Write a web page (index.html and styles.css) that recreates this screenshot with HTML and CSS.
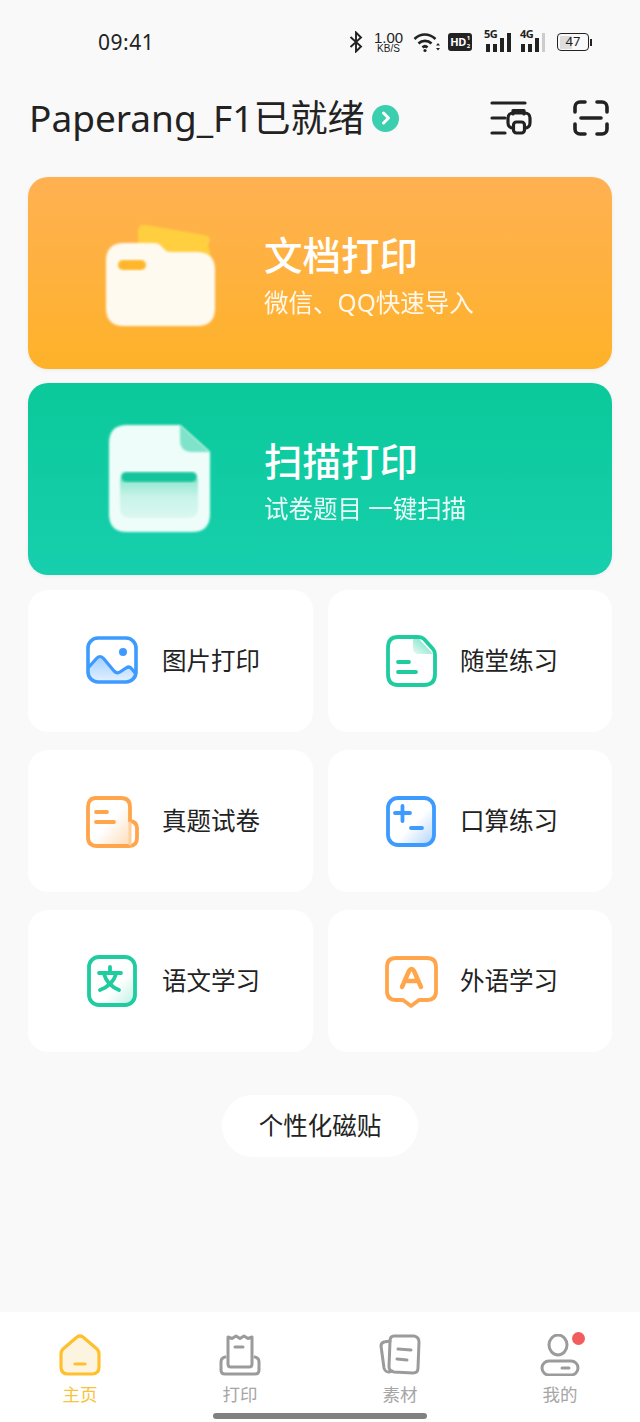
FILE: index.html
```html
<!DOCTYPE html>
<html lang="zh-CN">
<head>
  <meta charset="UTF-8">
  <meta name="viewport" content="width=device-width, initial-scale=1.0">
  <title>Paperang</title>
  <link rel="stylesheet" href="styles.css">
</head>
<body>
  <div class="page">
    <!-- status bar -->
    <div class="status">
      <span class="time">09:41</span>
      <div class="status-icons">
        <svg class="ic-bt" width="14" height="22" viewBox="0 0 14 22" fill="none" stroke="#222" stroke-width="1.9"><path d="M1.5 6 12 15.5 7 20.5V1.5l5 5L1.5 16"/></svg>
        <div class="speed"><span class="speed-num">1.00</span><span class="speed-unit">KB/S</span></div>
        <svg class="ic-wifi" width="27" height="22" viewBox="0 0 27 22" fill="none" stroke="#222" stroke-width="2.6"><path d="M1.5 8C7.5 2 16 2 22.500 8"/><path d="M5.500 12.500C9 9 15 9 18.500 12.500"/><path d="M9.500 16.500c1.500-1.500 3.500-1.500 5 0"/><circle cx="12" cy="19.500" r="1.600" fill="#222" stroke="none"/><path d="M23 14.500l2-2.500 2 2.500zM23 17l2 2.500 2-2.500z" fill="#222" stroke="none"/></svg>
        <div class="hd">HD<span class="hd-sub">1<br>2</span></div>
        <div class="signal signal-5g">
          <span class="net">5G</span>
          <svg width="28" height="22" viewBox="0 0 28 22" fill="#222"><rect x="2" y="13" width="4" height="8"/><rect x="9" y="13" width="4" height="8"/><rect x="16" y="7" width="4" height="14"/><rect x="23" y="2" width="4" height="19"/></svg>
        </div>
        <div class="signal signal-4g">
          <span class="net">4G</span>
          <svg width="26" height="22" viewBox="0 0 26 22" fill="#222"><rect x="1" y="13" width="4" height="8"/><rect x="8" y="13" width="4" height="8"/><rect x="15" y="7" width="4" height="14"/><rect x="22" y="2" width="3" height="19" fill="#ccc"/></svg>
        </div>
        <div class="battery"><div class="battery-body"><span class="battery-level"></span><span class="battery-num">47</span></div><span class="battery-cap"></span></div>
      </div>
    </div>

    <!-- title row -->
    <div class="topbar">
      <h1 class="device">Paperang_F1已就绪</h1>
      <span class="chev"><svg width="12" height="14" viewBox="0 0 12 14" fill="none" stroke="#fff" stroke-width="3" stroke-linecap="round" stroke-linejoin="round"><path d="M3.500 2 8.500 7l-5 5"/></svg></span>
      <svg class="ic-queue" width="42" height="36" viewBox="0 0 42 36" fill="none" stroke="#222" stroke-width="3.200" stroke-linecap="round" stroke-linejoin="round">
        <path d="M2 3h33M2 18h13M2 33h13"/>
        <path d="M23 14V10.500h11V14"/>
        <rect x="18" y="13" width="22" height="15" rx="5"/>
        <rect x="23.500" y="22" width="11" height="11" rx="3" fill="#f9f9f9"/>
      </svg>
      <svg class="ic-scan" width="36" height="36" viewBox="0 0 36 36" fill="none" stroke="#222" stroke-width="3.600" stroke-linecap="round">
        <path d="M2 12V7a5 5 0 0 1 5-5h5M24 2h5a5 5 0 0 1 5 5v5M34 24v5a5 5 0 0 1-5 5h-5M12 34H7a5 5 0 0 1-5-5v-5"/>
        <path d="M8 18h20"/>
      </svg>
    </div>

    <!-- big cards -->
    <div class="big-card card-orange">
      <svg class="big-icon" width="124" height="112" viewBox="0 0 124 112">
        <defs><filter id="soft" x="-10%" y="-10%" width="120%" height="120%"><feGaussianBlur stdDeviation="0.8"/></filter></defs>
        <path d="M38 13q1-6 8-5l58 10q6 1 6 5l-2 6 2 6v20H38z" fill="#ffcf3f" filter="url(#soft)"/>
        <path d="M24 26H54q5 0 8 4l3 3q2 2 5 2H97q18 0 18 18V91q0 18-18 18H24Q6 109 6 91V44Q6 26 24 26z" fill="#fffaf0" filter="url(#soft)"/>
        <rect x="18" y="43" width="28" height="10" rx="5" fill="#ffb62c" filter="url(#soft)"/>
      </svg>
      <div class="big-text">
        <div class="big-title">文档打印</div>
        <div class="big-sub">微信、QQ快速导入</div>
      </div>
    </div>
    <div class="big-card card-green">
      <svg class="big-icon" width="124" height="116" viewBox="0 0 124 116">
        <defs>
          <linearGradient id="scanfill" x1="0" y1="0" x2="0" y2="1"><stop offset="0" stop-color="#8fe6cf"/><stop offset="0.45" stop-color="#c8f3e8"/><stop offset="1" stop-color="#daf8f1"/></linearGradient>
        </defs>
        <path d="M27 4H80l30 27v62q0 18-18 18H27Q9 111 9 93V22Q9 4 27 4z" fill="#eefdf9" filter="url(#soft)"/>
        <path d="M80 4l30 27H92q-12 0-12-12z" fill="#7fe3ca" filter="url(#soft)"/>
        <path d="M20 58h78v29q0 10-10 10H30q-10 0-10-10z" fill="url(#scanfill)" filter="url(#soft)"/>
        <rect x="21" y="51" width="76" height="10" rx="5" fill="#16c49b" filter="url(#soft)"/>
      </svg>
      <div class="big-text">
        <div class="big-title">扫描打印</div>
        <div class="big-sub">试卷题目 一键扫描</div>
      </div>
    </div>

    <!-- small tiles -->
    <div class="tiles">
      <div class="tile">
        <svg class="tile-icon" width="54" height="54" viewBox="0 0 54 54" fill="none">
          <defs><linearGradient id="bluefade" x1="0" y1="0" x2="0" y2="1"><stop offset="0" stop-color="#a3d0ff"/><stop offset="1" stop-color="#e3f1ff"/></linearGradient></defs>
          <path d="M3 34 11 25q4-5 8 0L29 37q3 3 6 1l6-4q3-2 5 0l5 6v1q0 7-7 7H10q-7 0-7-7z" fill="url(#bluefade)"/>
          <path d="M3 34 11 25q4-5 8 0L29 37q3 3 6 1l6-4q3-2 5 0l5 6" stroke="#3d9bff" stroke-width="3.200"/>
          <rect x="3" y="4" width="48" height="44" rx="10" stroke="#3d9bff" stroke-width="3.600"/>
          <circle cx="38" cy="18" r="4" fill="#3d9bff"/>
        </svg>
        <span class="tile-label">图片打印</span>
      </div>
      <div class="tile">
        <svg class="tile-icon" width="54" height="54" viewBox="0 0 54 54" fill="none" stroke="#1fcca0" stroke-width="3.800" stroke-linecap="round" stroke-linejoin="round">
          <defs><linearGradient id="foldfade" x1="1" y1="0" x2="0" y2="1"><stop offset="0.3" stop-color="#8fe6cf"/><stop offset="1" stop-color="#e6faf4"/></linearGradient></defs>
          <path d="M28 5h6l14 15H34q-6 0-6-6z" fill="url(#foldfade)" stroke="none"/>
          <path d="M13 3h20q4 0 6 2l9 10q2 2 2 6V40q0 11-11 11H13Q3 51 3 40V14Q3 3 13 3z"/>
          <path d="M13 28h11M13 38h18"/>
        </svg>
        <span class="tile-label">随堂练习</span>
      </div>
      <div class="tile">
        <svg class="tile-icon" width="54" height="54" viewBox="0 0 54 54" fill="none" stroke="#ffa64d" stroke-width="3.800" stroke-linecap="round" stroke-linejoin="round">
          <defs><linearGradient id="orangefade" x1="0" y1="0" x2="1" y2="1"><stop offset="0.5" stop-color="#fff"/><stop offset="1" stop-color="#ffdcb8"/></linearGradient></defs>
          <path d="M11 4H36q9 0 9 9V52H12q-9 0-9-9V13q0-9 8-9z" fill="url(#orangefade)" stroke="none"/>
          <path d="M45 27V13q0-9-9-9H11q-8 0-8 9V43q0 9 9 9H44q8 0 8-8V34q0-6-7-7"/>
          <path class="tile-seam" d="M45 29V50"/>
          <path d="M11 18h11M11 28h18"/>
        </svg>
        <span class="tile-label">真题试卷</span>
      </div>
      <div class="tile">
        <svg class="tile-icon" width="54" height="54" viewBox="0 0 54 54" fill="none" stroke="#3d9bff" stroke-width="3.800" stroke-linecap="round">
          <defs><linearGradient id="bluecorner" x1="0" y1="0" x2="1" y2="1"><stop offset="0.55" stop-color="#fff"/><stop offset="1" stop-color="#aed3fb"/></linearGradient></defs>
          <rect x="3" y="4" width="46" height="47" rx="10" fill="url(#bluecorner)"/>
          <path d="M10 19h15M17.500 12v15M26 34h11"/>
        </svg>
        <span class="tile-label">口算练习</span>
      </div>
      <div class="tile">
        <svg class="tile-icon" width="54" height="54" viewBox="0 0 54 54" fill="none" stroke="#1fcca0" stroke-width="3.800" stroke-linecap="round" stroke-linejoin="round">
          <defs><linearGradient id="greencorner" x1="0" y1="0" x2="1" y2="1"><stop offset="0.6" stop-color="#fff"/><stop offset="1" stop-color="#bcf0e1"/></linearGradient></defs>
          <rect x="4" y="3" width="46" height="48" rx="10" fill="url(#greencorner)"/>
          <path d="M25 13v5M14 19h22M19 20q3 11 15 16M31 20q-3 11-16 16"/>
        </svg>
        <span class="tile-label">语文学习</span>
      </div>
      <div class="tile">
        <svg class="tile-icon" width="54" height="54" viewBox="0 0 54 54" fill="none" stroke="#ffa64d" stroke-width="3.800" stroke-linecap="round" stroke-linejoin="round">
          <path d="M11 4h31q9 0 9 9v24q0 9-9 9h-8l-8 6-8-6h-7q-9 0-9-9V13q0-9 9-9z" fill="#fff"/>
          <path class="tile-a" d="M17 33l7-16q2.500-4 5 0l7 16M20.500 27h12"/>
        </svg>
        <span class="tile-label">外语学习</span>
      </div>
    </div>

    <div class="pill">个性化磁贴</div>

    <!-- bottom tabs -->
    <div class="tabbar">
      <div class="tab tab-on">
        <svg width="42" height="42" viewBox="0 0 42 42" fill="none" stroke="#ffc02e" stroke-width="3.200" stroke-linecap="round" stroke-linejoin="round">
          <path d="M18 3q3-2 6 0l14 12q2 2 2 5v13q0 7-7 7H9q-7 0-7-7V20q0-3 2-5z" fill="#fdf4e0"/>
          <path d="M16 30h10"/>
        </svg>
        <span class="tab-label">主页</span>
      </div>
      <div class="tab">
        <svg width="42" height="42" viewBox="0 0 42 42" fill="none" stroke="#9b9b9b" stroke-width="3" stroke-linecap="round" stroke-linejoin="round">
          <path d="M9 30V3l4 1.500L17 2l4 2.500L25 2l4 2.500L33 3v27q0 3-3 3H12q-3 0-3-3z"/>
          <path d="M6 23q-4 1-4 5v8q0 4 4 4h30q4 0 4-4v-8q0-4-4-5"/>
          <path d="M16 13h8"/>
        </svg>
        <span class="tab-label">打印</span>
      </div>
      <div class="tab">
        <svg width="42" height="42" viewBox="0 0 42 42" fill="none" stroke="#9b9b9b" stroke-width="3" stroke-linecap="round" stroke-linejoin="round">
          <path d="M11 7 5 8q-3 1-3 4l3 22q1 4 5 4l3-1"/>
          <path d="M15 2h20q5 1 5 6l-1 26q0 5-5 5l-19-1q-5-1-5-5l1-26q0-5 4-5z"/>
          <path d="M19 15l13 1M18 25l10 1"/>
        </svg>
        <span class="tab-label">素材</span>
      </div>
      <div class="tab">
        <div class="tab-icon-wrap">
          <svg width="42" height="42" viewBox="0 0 42 42" fill="none" stroke="#9b9b9b" stroke-width="3" stroke-linecap="round" stroke-linejoin="round">
            <ellipse cx="19" cy="11" rx="9" ry="10"/>
            <rect x="3" y="27" width="36" height="14" rx="7"/>
            <path d="M23 34h7"/>
          </svg>
          <span class="badge"></span>
        </div>
        <span class="tab-label">我的</span>
      </div>
      <div class="home-bar"></div>
    </div>
  </div>
</body>
</html>
```

FILE: styles.css
```css
* {
  box-sizing: border-box;
}

body {
  margin: 0;
  background-color: #f9f9f9;
  font-family: "Noto Sans", "Noto Sans CJK SC", sans-serif;
  color: #222;
}

.page {
  width: 640px;
  height: 1422px;
  overflow: hidden;
  display: flex;
  flex-direction: column;
}

/* status bar */
.status {
  height: 84px;
  flex: none;
  display: flex;
  align-items: center;
  justify-content: space-between;
  padding: 0 48px 0 98px;
}

.time {
  font-size: 21px;
  letter-spacing: 0.5px;
}

.status-icons {
  display: flex;
  align-items: center;
  gap: 11px;
}

.ic-bt {
  margin-right: 1px;
}

.speed {
  display: flex;
  flex-direction: column;
  align-items: center;
  width: 27px;
  font-family: "Liberation Sans", sans-serif;
}

.speed-num {
  font-size: 15px;
  line-height: 13px;
}

.speed-unit {
  font-size: 10px;
  line-height: 10px;
}

.hd {
  width: 24px;
  height: 18px;
  margin-left: -3px;
  background-color: #222;
  border-radius: 3px;
  color: #fff;
  font-size: 11px;
  font-weight: 700;
  line-height: 18px;
  display: flex;
  justify-content: center;
  letter-spacing: -0.5px;
}

.hd-sub {
  font-size: 6px;
  line-height: 8px;
  padding: 1px 0 0 1px;
}

.signal {
  position: relative;
  display: flex;
}

.signal-5g {
  margin-left: 1px;
}

.signal-4g {
  margin-left: -3px;
}

.net {
  position: absolute;
  left: 0;
  top: -3px;
  font-size: 11px;
  font-weight: 700;
  line-height: 12px;
  letter-spacing: -0.5px;
}

.battery {
  display: flex;
  align-items: center;
  gap: 1px;
}

.battery-body {
  position: relative;
  width: 32px;
  height: 18px;
  border: 1.500px solid #222;
  border-radius: 4px;
  padding: 1.500px;
}

.battery-level {
  display: block;
  width: 48%;
  height: 100%;
  background-color: #ddd;
  border-radius: 1px;
}

.battery-num {
  position: absolute;
  left: 0;
  right: 0;
  top: 0;
  text-align: center;
  font-size: 13px;
  line-height: 15px;
}

.battery-cap {
  width: 2px;
  height: 7px;
  background-color: #222;
}

/* title row */
.topbar {
  height: 68px;
  flex: none;
  margin-bottom: 25px;
  padding-left: 29px;
  display: flex;
  align-items: center;
}

.device {
  margin: 0;
  font-size: 37px;
  font-weight: 400;
  line-height: 68px;
  white-space: nowrap;
}

.chev {
  width: 27px;
  height: 27px;
  margin-left: 8px;
  border-radius: 50%;
  background-color: #3ccfaf;
  display: flex;
  align-items: center;
  justify-content: center;
}

.ic-queue {
  margin-left: auto;
}

.ic-scan {
  margin: 0 31px 0 41px;
}

/* big cards */
.big-card {
  height: 192px;
  flex: none;
  margin: 0 28px 14px;
  padding-left: 72px;
  border-radius: 20px;
  display: flex;
  align-items: center;
  color: #fff;
  box-shadow: 0 1px 4px rgba(0, 0, 0, 0.06);
}

.card-orange {
  background: linear-gradient(180deg, #ffb152, #feb229);
}

.card-green {
  background: linear-gradient(180deg, #0bc99a, #17cfad);
}

.big-icon {
  flex: none;
}

.big-text {
  margin-left: 40px;
  padding-top: 5px;
}

.big-title {
  font-size: 38.500px;
  font-weight: 500;
  line-height: 46px;
  white-space: nowrap;
}

.big-sub {
  margin-top: 9px;
  font-size: 24.500px;
  line-height: 32px;
  opacity: 0.9;
  white-space: nowrap;
}

/* small tiles */
.tiles {
  flex: none;
  margin: 1px 28px 0;
  display: grid;
  grid-template-columns: 285px 284px;
  grid-auto-rows: 142px;
  column-gap: 15px;
  row-gap: 18px;
}

.tile {
  background-color: #fff;
  border-radius: 20px;
  padding-left: 57px;
  display: flex;
  align-items: center;
  gap: 23px;
}

.tile:nth-child(even) {
  gap: 21px;
}

.tile-icon {
  flex: none;
}

.tile-label {
  padding-bottom: 3px;
  font-size: 24.500px;
  white-space: nowrap;
}

.tile-seam {
  stroke: #ffcf9e;
  stroke-width: 3px;
}

.tile-a {
  stroke-width: 4.500px;
}

.pill {
  flex: none;
  width: 196px;
  height: 62px;
  margin: 43px auto 0;
  background-color: #fff;
  border-radius: 31px;
  font-size: 24.500px;
  line-height: 62px;
  text-align: center;
}

/* bottom tabs */
.tabbar {
  position: relative;
  margin-top: auto;
  height: 110px;
  flex: none;
  background-color: #fff;
  display: grid;
  grid-template-columns: repeat(4, 160px);
  padding-top: 22px;
}

.tab {
  display: flex;
  flex-direction: column;
  align-items: center;
  gap: 7px;
}

.tab-label {
  font-size: 17.500px;
  line-height: 22px;
  color: #a6a6a6;
}

.tab-on .tab-label {
  color: #f8c33c;
}

.tab-icon-wrap {
  position: relative;
  height: 42px;
}

.badge {
  position: absolute;
  top: -2px;
  right: -4px;
  width: 13px;
  height: 13px;
  border-radius: 50%;
  background-color: #f25c5c;
}

.home-bar {
  position: absolute;
  left: 213px;
  bottom: 3px;
  width: 214px;
  height: 6px;
  border-radius: 3px;
  background-color: #808080;
}
```
